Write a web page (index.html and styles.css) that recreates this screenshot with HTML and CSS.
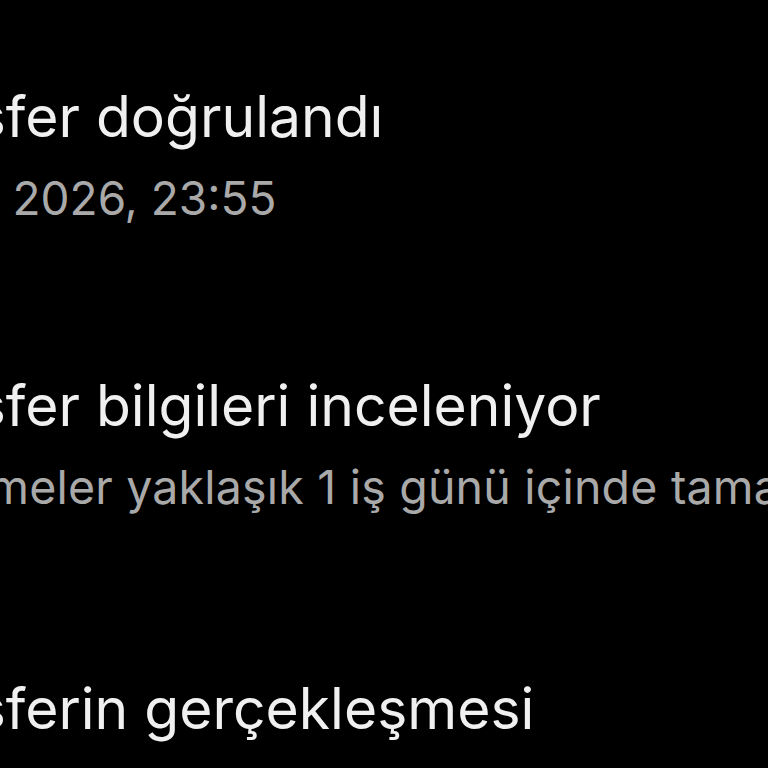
FILE: index.html
```html
<!DOCTYPE html>
<html lang="tr">
<head>
<meta charset="utf-8">
<link rel="stylesheet" href="styles.css">
</head>
<body>
<main class="timeline">
  <section class="step step-done">
    <h2 class="step-title">Transfer doğrulandı</h2>
    <p class="step-sub step-date">12 Şub 2026, 23:55</p>
  </section>
  <section class="step step-active">
    <h2 class="step-title">Transfer bilgileri inceleniyor</h2>
    <p class="step-sub">İncelemeler yaklaşık 1 iş günü içinde tamamlanır</p>
  </section>
  <section class="step step-pending">
    <h2 class="step-title">Transferin gerçekleşmesi</h2>
  </section>
</main>
</body>
</html>
```
FILE: styles.css
```css
html, body {
  margin: 0;
  padding: 0;
  background: #000;
  width: 768px;
  height: 768px;
  overflow: hidden;
}
.timeline {
  font-family: Inter, "Noto Sans", sans-serif;
  margin-left: -145px;
  padding-top: 83px;
  display: flex;
  flex-direction: column;
  white-space: nowrap;
}
.step {
  display: flex;
  flex-direction: column;
}
.step-title {
  margin: 0;
  font-size: 57px;
  font-weight: 400;
  line-height: 68px;
  color: #f0f0f0;
}
.step-sub {
  margin: 20px 0 0;
  font-size: 46.5px;
  line-height: 54px;
  letter-spacing: 0.2px;
  color: #a9a9a9;
}
.step-date {
  font-size: 46px;
  letter-spacing: 0;
}
.step-active { margin-top: 147px; }
.step-pending { margin-top: 161px; }
```
